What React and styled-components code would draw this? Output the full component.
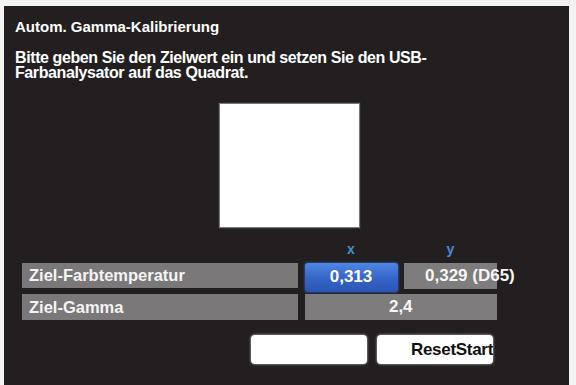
import React from "react";
import styled, { createGlobalStyle } from "styled-components";

const Global = createGlobalStyle`
  html, body { margin: 0; padding: 0; background: #f3f3f3; }
  body { font-family: "Liberation Sans", Arial, sans-serif; }
`;

const Screen = styled.div`
  width: 576px;
  height: 385px;
  padding: 6px 7px 0 4px;
  box-sizing: border-box;
  overflow: hidden;
`;

const Panel = styled.div`
  width: 565px;
  height: 379px;
  background: #231f20;
  color: #fff;
  box-sizing: border-box;
  padding: 12px 0 0 11px;
  display: flex;
  flex-direction: column;
`;

const Title = styled.div`
  font-size: 15px;
  font-weight: bold;
  line-height: 18px;
`;

const Instruction = styled.div`
  margin-top: 14px;
  font-size: 16px;
  font-weight: bold;
  line-height: 15px;
  letter-spacing: -0.4px;
  width: 480px;
`;

const Square = styled.div`
  margin: 24px 0 0 205px;
  width: 139px;
  height: 123px;
  background: #ffffff;
  box-shadow: 0 0 1px 1px rgba(255, 255, 255, 0.4);
`;

const Table = styled.div`
  margin: 11px 0 0 7px;
  display: grid;
  grid-template-columns: 276px 93px 93px;
  column-gap: 6.5px;
  row-gap: 5px;
`;

const Head = styled.div`
  grid-column: ${(p) => p.$col};
  text-align: center;
  color: #4c8ad6;
  font-size: 14px;
  font-weight: bold;
  line-height: 22px;
  height: 20px;
`;

const Label = styled.div`
  grid-column: 1;
  background: #7a7879;
  height: ${(p) => p.$h}px;
  box-sizing: border-box;
  padding-left: 7px;
  font-size: 16.5px;
  font-weight: bold;
  line-height: ${(p) => p.$h}px;
  color: #f4f4f4;
`;

const Value = styled.div`
  grid-column: ${(p) => (p.$span ? "2 / span 2" : "auto")};
  background: #7e7c7d;
  height: ${(p) => p.$h}px;
  font-size: 17px;
  font-weight: bold;
  line-height: ${(p) => p.$h}px;
  color: #f6f6f6;
  white-space: nowrap;
  text-align: ${(p) => (p.$left ? "left" : "center")};
  padding-left: ${(p) => (p.$left ? "21px" : "0")};
  box-sizing: border-box;
`;

const Selected = styled.div`
  height: 29px;
  margin-bottom: -3px;
  border-radius: 3px;
  background: linear-gradient(#4f86e6, #3563c6 55%, #2b55b4);
  box-shadow: 0 0 2px 1px rgba(60, 110, 210, 0.45);
  color: #fff;
  font-size: 17px;
  font-weight: bold;
  line-height: 27px;
  text-align: center;
`;

const Buttons = styled.div`
  margin: 15px 0 0 236px;
  display: flex;
  gap: 10px;
`;

const Button = styled.div`
  width: 116px;
  height: 29px;
  background: #ffffff;
  border-radius: 4px;
  box-shadow: 0 0 2px 1px rgba(255, 255, 255, 0.35);
  color: #111;
  font-size: 17px;
  font-weight: bold;
  line-height: 29px;
  text-align: right;
  overflow: hidden;
  white-space: nowrap;
  letter-spacing: -0.3px;
`;

export default function App() {
  return (
    <>
      <Global />
      <Screen>
        <Panel>
          <Title>Autom. Gamma-Kalibrierung</Title>
          <Instruction>
            Bitte geben Sie den Zielwert ein und setzen Sie den USB-
            <br />
            Farbanalysator auf das Quadrat.
          </Instruction>
          <Square />
          <Table>
            <Head $col={2}>x</Head>
            <Head $col={3}>y</Head>
            <Label $h={25}>Ziel-Farbtemperatur</Label>
            <Selected>0,313</Selected>
            <Value $h={26} $left>0,329 (D65)</Value>
            <Label $h={26}>Ziel-Gamma</Label>
            <Value $h={26} $span>2,4</Value>
          </Table>
          <Buttons>
            <Button></Button>
            <Button>ResetStart</Button>
          </Buttons>
        </Panel>
      </Screen>
    </>
  );
}
